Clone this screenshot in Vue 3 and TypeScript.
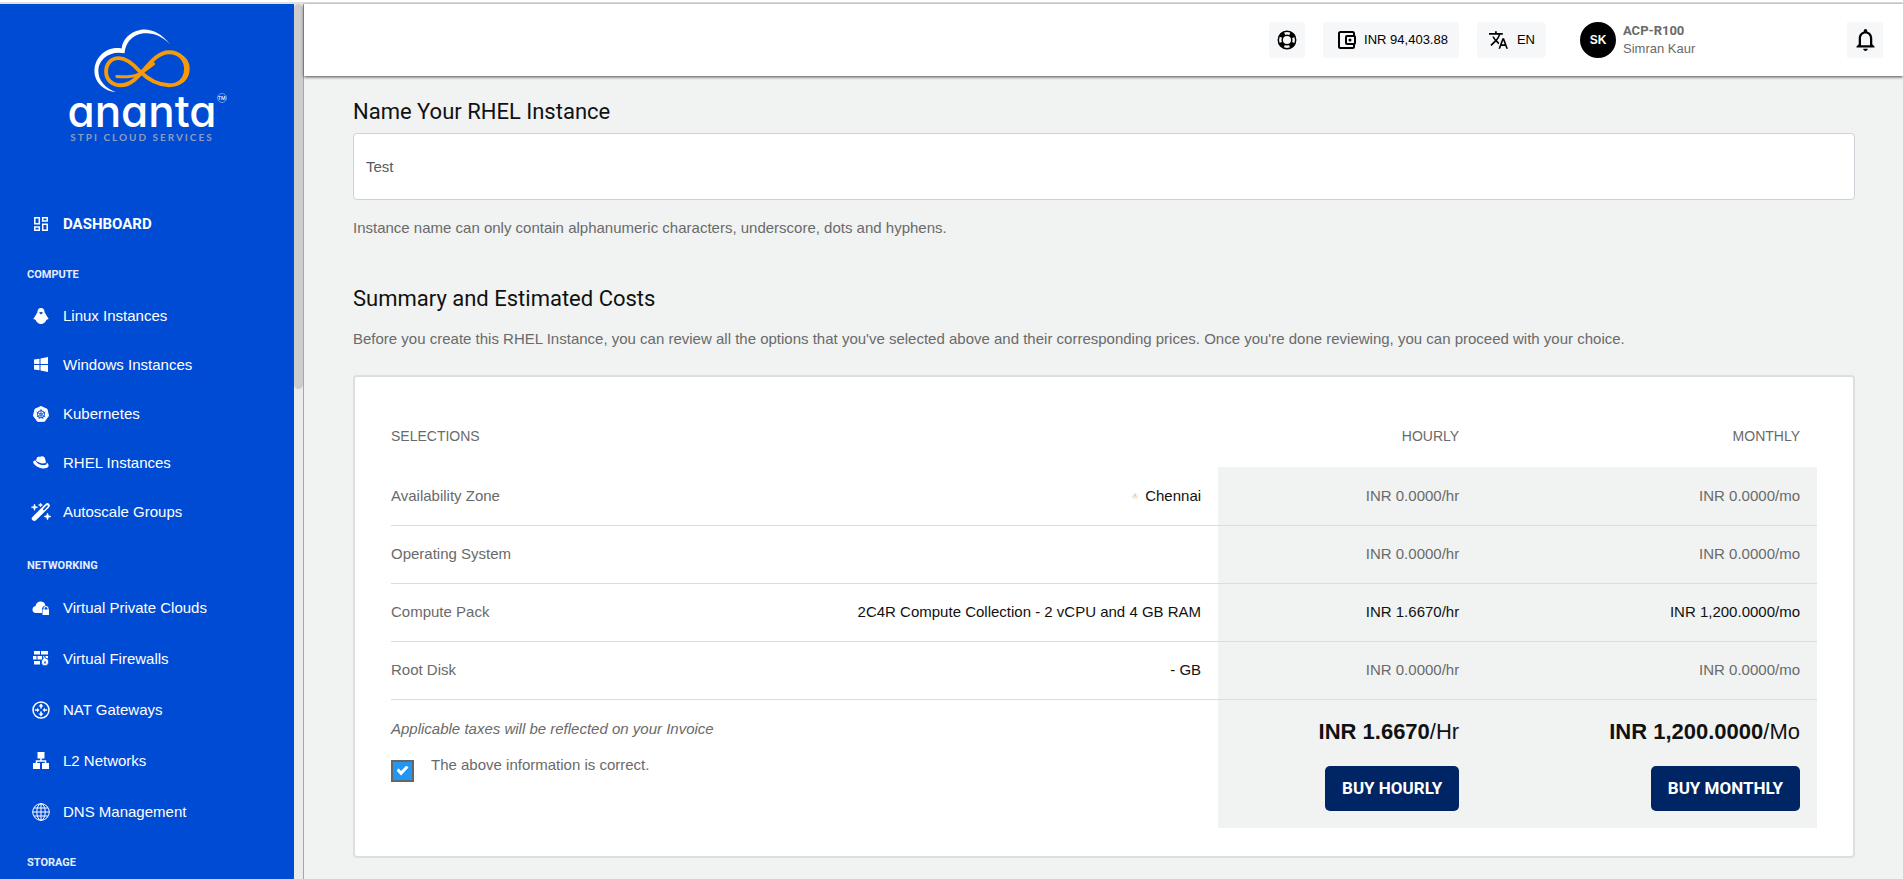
<script setup lang="ts">
import { ref } from 'vue'

interface NavItem {
  label: string
  icon: string
}
interface NavGroup {
  title: string
  key: string
  items: NavItem[]
}
interface CostRow {
  label: string
  value: string
  hourly: string
  monthly: string
  priced?: boolean
  badge?: boolean
}

const groups: NavGroup[] = [
  {
    title: 'COMPUTE',
    key: 'compute',
    items: [
      { label: 'Linux Instances', icon: 'linux' },
      { label: 'Windows Instances', icon: 'windows' },
      { label: 'Kubernetes', icon: 'kubernetes' },
      { label: 'RHEL Instances', icon: 'rhel' },
      { label: 'Autoscale Groups', icon: 'wand' },
    ],
  },
  {
    title: 'NETWORKING',
    key: 'networking',
    items: [
      { label: 'Virtual Private Clouds', icon: 'vpc' },
      { label: 'Virtual Firewalls', icon: 'firewall' },
      { label: 'NAT Gateways', icon: 'nat' },
      { label: 'L2 Networks', icon: 'l2' },
      { label: 'DNS Management', icon: 'dns' },
    ],
  },
  { title: 'STORAGE', key: 'storage', items: [] },
]

const rows: CostRow[] = [
  { label: 'Availability Zone', value: 'Chennai', hourly: 'INR 0.0000/hr', monthly: 'INR 0.0000/mo', badge: true },
  { label: 'Operating System', value: '', hourly: 'INR 0.0000/hr', monthly: 'INR 0.0000/mo' },
  {
    label: 'Compute Pack',
    value: '2C4R Compute Collection - 2 vCPU and 4 GB RAM',
    hourly: 'INR 1.6670/hr',
    monthly: 'INR 1,200.0000/mo',
    priced: true,
  },
  { label: 'Root Disk', value: '- GB', hourly: 'INR 0.0000/hr', monthly: 'INR 0.0000/mo' },
]

const instanceName = ref('Test')
const confirmed = ref(true)
</script>

<template>
  <div class="page">
    <aside class="sidebar">
      <a href="#" class="brand" aria-label="ananta STPI Cloud Services">
        <svg class="brand-mark" viewBox="0 0 100 68" aria-hidden="true">
          <path
            d="M79 17C70 5 58 0 48 2C37 4 30 12 29 21C14 18 1 30 1 44C1 57 12 65 23 66C12 62 5 54 5 44C5 32 17 23 32 26C33 16 39 8 49 6C60 4 70 8 79 17Z"
            fill="#fff"
          />
          <path
            d="M47 44C38 34 32 31 26 31C18 31 13 37 13 45C13 53 19 59 28 59C49 59 57 25 78 25C89 25 96 33 96 43C96 53 88 59 78 59C66 59 56 53 47 44Z"
            fill="none"
            stroke="#f79a0a"
            stroke-width="4"
          />
          <path d="M85 27C97 33 98 50 85 58C102 56 103 29 85 27Z" fill="#f79a0a" stroke="#f79a0a" stroke-width="2" />
          <path d="M24 50C42 51 46 50 62 37" fill="none" stroke="#f79a0a" stroke-width="3" stroke-linecap="round" />
        </svg>
        <span class="brand-name">ananta<small class="tm">TM</small></span>
        <span class="brand-tag">STPI CLOUD SERVICES</span>
      </a>

      <nav class="nav">
        <a href="#" class="nav-item nav-top">
          <span class="nav-icon">
            <svg width="14" height="14" viewBox="0 0 14 14" fill="none" stroke="currentColor" stroke-width="1.500" aria-hidden="true">
              <path d="M.8.8h4.500v6H.8zM.8 10h4.500v3.200H.8zM8.700.8h4.500V4H8.700zM8.700 7.200h4.500v6H8.700z" />
            </svg>
          </span>
          <span>DASHBOARD</span>
        </a>

        <section v-for="group in groups" :key="group.key" :class="['nav-group', group.key]">
          <h2 class="nav-title">{{ group.title }}</h2>
          <a v-for="item in group.items" :key="item.label" href="#" class="nav-item">
            <span class="nav-icon">
              <svg v-if="item.icon === 'linux'" width="16" height="16" viewBox="0 0 16 16" fill="currentColor" aria-hidden="true">
                <path fill-rule="evenodd" d="M8 0C5.500 0 4.500 2 4.300 4.500L2.500 7.500L.3 11L2.500 11.800C3.500 14.500 5.500 16 8 16S12.500 14.500 13.500 11.800L15.700 11L13.500 7.500L11.700 4.500C11.500 2 10.500 0 8 0ZM6.500 4h1l.5.5.5-.5h1v1.200L8 6.500L6.500 5.200Z" />
              </svg>
              <svg v-else-if="item.icon === 'windows'" width="14" height="15" viewBox="0 0 14 15" fill="currentColor" aria-hidden="true">
                <path d="M0 2.500L5.500 1.700V7H0zM6.500 1.500L14 0V7H6.500zM0 8h5.500v5.300L0 12.500zM6.500 8H14v7l-7.500-1.500z" />
              </svg>
              <svg v-else-if="item.icon === 'kubernetes'" width="16" height="16" viewBox="0 0 16 16" aria-hidden="true">
                <path d="M8 .5L14 3.200L15.500 9.800L11.500 15.300H4.500L.5 9.800L2 3.200Z" fill="currentColor" stroke="currentColor" stroke-linejoin="round" />
                <g fill="none" stroke="#004bd3">
                  <circle cx="8" cy="8.300" r="3.600" />
                  <circle cx="8" cy="8.300" r="1" />
                  <path d="M8 3v4M3.600 6l3.400 1.800M12.400 6L9 7.800M3.800 11L7 8.800M12.200 11L9 8.800M6 13l1.600-3.600M10 13L8.400 9.400" stroke-width=".8" />
                </g>
              </svg>
              <svg v-else-if="item.icon === 'rhel'" width="16" height="13" viewBox="0 0 16 13" fill="currentColor" aria-hidden="true">
                <path d="M4 1.500C5 0 6.500 1 8 .5C10 0 11.500 1 12 2.500L13 6.500C11 8.500 5 7 3 4.500Z" />
                <path d="M2.500 4.500C-.5 4.500-.5 7 2 9C5 12 10 13 13.500 12C16.500 11 16 8 13.800 6.500C14.200 9.500 10 9.500 7 8.500C4.500 7.500 3 6 2.500 4.500Z" />
              </svg>
              <svg v-else-if="item.icon === 'wand'" width="20" height="18" viewBox="0 0 20 18" fill="currentColor" aria-hidden="true">
                <path fill-rule="evenodd" d="M1.200 14.200L14.200 1.200C15.700-.3 17-.3 18 .7S19.300 3.200 18 4.500L5 17.200C4 18.200 2.600 18.200 1.600 17.200S.2 15.200 1.200 14.200ZM11.800 6.200L13 7.400L16.700 3.600C17.500 2.800 16.300 1.500 15.400 2.500Z" />
                <path d="M3.500 1L4.300 3.400L6.700 4.200L4.300 5L3.500 7.400L2.700 5L.3 4.200L2.700 3.400ZM9.500 0L10 1.500L11.500 2L10 2.500L9.500 4L9 2.500L7.500 2L9 1.500ZM16.500 10L17.400 12.600L20 13.500L17.400 14.400L16.500 17L15.600 14.400L13 13.500L15.600 12.600Z" stroke="currentColor" stroke-width=".6" />
              </svg>
              <svg v-else-if="item.icon === 'vpc'" width="18" height="14" viewBox="0 0 18 14" fill="currentColor" aria-hidden="true">
                <path d="M4 12C1.500 12 .5 10.500 .5 8.500S2 5.300 3.500 5C4 2 6 .5 8.500 .5C11 .5 13 2 13.500 4.500C11 5 10 6.500 10 8V12Z" />
                <path fill-rule="evenodd" d="M10.500 8.500h1V7.500a2.500 2.500 0 0 1 5 0v1h.5V14h-6.500ZM12.500 8.500h3V7.500a1.500 1.500 0 0 0-3 0Z" />
              </svg>
              <svg v-else-if="item.icon === 'firewall'" width="16" height="15" viewBox="0 0 16 15" aria-hidden="true">
                <path fill="currentColor" d="M1 0h6v3.500H1zM8 0h7v3.500H8zM0 5h3.500v3.500H0zM4.500 5H9v3.500H4.500zM1 10h6v3.500H1zM10 5h5v3H10z" />
                <path d="M11.500 4.500C12 7 8.300 8 8.300 11.200A3.700 3.700 0 0 0 15.700 11C15.700 9 14.500 8.500 14.200 7L13.300 8Z" fill="currentColor" stroke="#004bd3" stroke-width=".8" />
                <path d="M12 9.500C11 11 11 12.800 12 12.800S13 11 12 9.500Z" fill="#004bd3" />
              </svg>
              <svg v-else-if="item.icon === 'nat'" width="18" height="18" viewBox="0 0 18 18" fill="currentColor" aria-hidden="true">
                <circle cx="9" cy="9" r="8" fill="none" stroke="currentColor" stroke-width="1.500" />
                <path d="M9 2.500L11.500 5.500H9.800V7.500H8.200V5.500H6.500ZM9 15.500L11.500 12.500H9.800V10.500H8.200V12.500H6.500ZM7.500 9L5 6.800V8.200H2.800V9.800H5V11.200ZM10.500 9L13 6.800V8.200H15.200V9.800H13V11.200Z" />
              </svg>
              <svg v-else-if="item.icon === 'l2'" width="16" height="17" viewBox="0 0 16 17" aria-hidden="true">
                <path d="M4.500 0h7v6.500h-7zM0 11h7v6H0zM9 11h7v6H9z" fill="currentColor" />
                <path d="M8 6v3M3.500 11.500V9h9v2.500" fill="none" stroke="currentColor" stroke-width="1.500" />
              </svg>
              <svg v-else width="18" height="18" viewBox="0 0 18 18" fill="none" stroke="currentColor" aria-hidden="true">
                <circle cx="9" cy="9" r="8.300" />
                <ellipse cx="9" cy="9" rx="4.200" ry="8.300" />
                <path d="M9 .7v16.600M.7 9h16.600M2 5h14M2 13h14" />
              </svg>
            </span>
            <span>{{ item.label }}</span>
          </a>
        </section>
      </nav>
    </aside>
    <div class="scroll-track" aria-hidden="true"><div class="scroll-thumb"></div></div>

    <div class="content">
      <header class="topbar">
        <button type="button" class="chip chip-square" aria-label="Support">
          <svg width="20" height="20" viewBox="0 0 20 20" fill="none" stroke="currentColor" aria-hidden="true">
            <circle cx="10" cy="10" r="8.700" stroke-width="1.500" />
            <circle cx="10" cy="10" r="4.800" stroke-width="1.500" />
            <circle cx="10" cy="10" r="7" stroke-width="4.500" stroke-dasharray="5.500 5.500" stroke-dashoffset="-2.750" />
          </svg>
        </button>
        <button type="button" class="chip chip-wallet">
          <svg width="18" height="18" viewBox="0 0 18 18" fill="none" stroke="currentColor" stroke-width="2" aria-hidden="true">
            <path d="M16 5V2.500Q16 1 14.500 1H2.500Q1 1 1 2.500v13Q1 17 2.500 17h12Q16 17 16 15.500V13" />
            <rect x="8" y="5" width="9" height="8" rx="1" />
            <circle cx="12" cy="9" r="1.500" fill="currentColor" stroke="none" />
          </svg>
          <span>INR 94,403.88</span>
        </button>
        <button type="button" class="chip chip-lang">
          <svg width="19" height="18" viewBox="1 2 22 20" fill="currentColor" aria-hidden="true">
            <path d="M12.870 15.070l-2.540-2.510.03-.03A17.520 17.520 0 0 0 14.070 6H17V4h-7V2H8v2H1v1.990h11.170C11.500 7.920 10.440 9.750 9 11.350 8.070 10.320 7.300 9.190 6.690 8h-2c.73 1.630 1.730 3.170 2.980 4.560l-5.090 5.020L4 19l5-5 3.110 3.110.76-2.040zM18.500 10h-2L12 22h2l1.120-3h4.750L21 22h2l-4.500-12zm-2.620 7l1.620-4.330L19.120 17h-3.240z" />
          </svg>
          <span>EN</span>
        </button>
        <a href="#" class="user">
          <span class="avatar">SK</span>
          <span class="user-text">
            <strong>ACP-R100</strong>
            <span>Simran Kaur</span>
          </span>
        </a>
        <button type="button" class="chip chip-square chip-bell" aria-label="Notifications">
          <svg width="19" height="22" viewBox="4 2.500 16 19.500" fill="currentColor" aria-hidden="true">
            <path d="M12 22c1.100 0 2-.9 2-2h-4c0 1.100.9 2 2 2zm6-6v-5c0-3.070-1.630-5.640-4.500-6.320V4c0-.83-.67-1.500-1.500-1.500s-1.500.67-1.500 1.500v.68C7.640 5.360 6 7.920 6 11v5l-2 2v1h16v-1l-2-2zm-2 1H8v-6c0-2.480 1.510-4.500 4-4.500s4 2.020 4 4.500v6z" />
          </svg>
        </button>
      </header>

      <main class="main">
        <label for="instance-name" class="heading">Name Your RHEL Instance</label>
        <input id="instance-name" v-model="instanceName" type="text" class="name-input" />
        <p class="note">Instance name can only contain alphanumeric characters, underscore, dots and hyphens.</p>

        <h1 class="heading summary">Summary and Estimated Costs</h1>
        <p class="note intro">
          Before you create this RHEL Instance, you can review all the options that you've selected above and their
          corresponding prices. Once you're done reviewing, you can proceed with your choice.
        </p>

        <div class="card">
          <table class="costs">
            <colgroup>
              <col class="col-label" />
              <col class="col-value" />
              <col class="col-hourly" />
              <col class="col-monthly" />
            </colgroup>
            <thead>
              <tr>
                <th colspan="2" scope="col" class="left">SELECTIONS</th>
                <th scope="col">HOURLY</th>
                <th scope="col">MONTHLY</th>
              </tr>
            </thead>
            <tbody>
              <tr v-for="row in rows" :key="row.label" :class="{ priced: row.priced }">
                <td class="left">{{ row.label }}</td>
                <td class="value">
                  <svg v-if="row.badge" class="zone" width="8" height="10" viewBox="0 0 8 10" aria-hidden="true">
                    <circle cx="4" cy="5" r="3.500" fill="#f6f6f4" />
                    <path d="M1.500 5h5v2h-5z" fill="#f3e6cc" />
                    <path d="M3 3h2v2H3z" fill="#c9d6e6" />
                  </svg>
                  {{ row.value }}
                </td>
                <td class="price">{{ row.hourly }}</td>
                <td class="price">{{ row.monthly }}</td>
              </tr>
            </tbody>
            <tfoot>
              <tr>
                <td colspan="2" class="left">
                  <em>Applicable taxes will be reflected on your Invoice</em>
                  <label class="confirm">
                    <input v-model="confirmed" type="checkbox" />
                    <span>The above information is correct.</span>
                  </label>
                </td>
                <td class="price">
                  <div class="total"><strong>INR 1.6670</strong>/Hr</div>
                  <button type="button" class="buy">BUY HOURLY</button>
                </td>
                <td class="price">
                  <div class="total"><strong>INR 1,200.0000</strong>/Mo</div>
                  <button type="button" class="buy">BUY MONTHLY</button>
                </td>
              </tr>
            </tfoot>
          </table>
        </div>
      </main>
    </div>
  </div>
</template>

<style>
body {
  margin: 0;
  background: #f0f3f2;
}
</style>

<style scoped>
.page {
  box-sizing: border-box;
  display: flex;
  height: 100vh;
  overflow: hidden;
  padding-top: 2px;
  border-top: 2px solid #fff;
  background: linear-gradient(#e0e0e0 2px, #f0f3f2 2px);
  font-family: 'Liberation Sans', Arial, sans-serif;
  font-size: 15px;
  line-height: 24px;
  color: #6a6a6a;
}
a {
  color: inherit;
  text-decoration: none;
}
button {
  font: inherit;
  border: 0;
  cursor: pointer;
}

.sidebar {
  flex: 0 0 294px;
  overflow: hidden;
  background: #004bd3;
  color: #fff;
}
.brand {
  display: flex;
  flex-direction: column;
  align-items: center;
  height: 171px;
  padding: 24px 10px 0 0;
}
.brand-mark {
  width: 100px;
  height: 66px;
}
.brand-name {
  position: relative;
  font-family: Inter, Lato, sans-serif;
  font-feature-settings: 'cv11';
  font-size: 44px;
  font-weight: 500;
  line-height: 34px;
}
.tm {
  position: absolute;
  top: -1px;
  left: 100%;
  width: 8px;
  height: 8px;
  border: 1px solid #6f97e4;
  border-radius: 50%;
  font-size: 5px;
  line-height: 8px;
  text-align: center;
}
.brand-tag {
  margin-top: 2px;
  font-family: Lato, sans-serif;
  font-size: 10px;
  font-weight: 700;
  line-height: 14px;
  letter-spacing: 2px;
  color: #8f9dbb;
}
.nav-item {
  display: flex;
  align-items: center;
  gap: 12px;
  height: 50px;
  padding-left: 31px;
}
.compute .nav-item {
  height: 49px;
}
.networking .nav-item {
  height: 51px;
}
.nav-top {
  font-family: Roboto, sans-serif;
  font-weight: 700;
}
.nav-icon {
  display: flex;
  justify-content: center;
  width: 20px;
}
.nav-group {
  margin-top: 10px;
}
.nav-group.networking {
  margin-top: 14px;
}
.nav-title {
  margin: 0;
  padding-left: 27px;
  font-family: Roboto, sans-serif;
  font-size: 11px;
  font-weight: 700;
  line-height: 32px;
  color: #e6edfb;
}

.scroll-track {
  flex: 0 0 9px;
  border-right: 1px solid #8fa9dc;
  background: #ebebeb;
}
.scroll-thumb {
  height: 44%;
  border-radius: 5px;
  background: #cdcdcd;
}

.content {
  flex: 1;
  min-width: 0;
}
.topbar {
  display: flex;
  align-items: center;
  justify-content: flex-end;
  gap: 18px;
  height: 72px;
  padding-right: 20px;
  background: #fff;
  box-shadow: 0 1px 3px rgba(0, 0, 0, 0.7);
  font-size: 13px;
}
.chip {
  display: flex;
  align-items: center;
  gap: 8px;
  height: 36px;
  padding: 0 11px 0 15px;
  border-radius: 4px;
  background: #f6f7f9;
  color: #000;
}
.chip-square {
  justify-content: center;
  width: 36px;
  padding: 0;
}
.chip-bell {
  border-radius: 0;
}
.chip-lang {
  padding: 0 11px 0 12px;
  gap: 9px;
}
.user {
  display: flex;
  align-items: center;
  gap: 7px;
  width: 249px;
  margin-left: 16px;
}
.avatar {
  width: 36px;
  border-radius: 50%;
  background: #000;
  color: #fff;
  font-size: 12px;
  font-weight: 700;
  line-height: 36px;
  text-align: center;
}
.user-text {
  display: flex;
  flex-direction: column;
  line-height: 18px;
}
.user-text strong {
  font-family: Roboto, sans-serif;
  font-size: 13px;
}

.main {
  padding: 21px 48px 20px 49px;
}
.heading {
  display: block;
  margin: 0;
  font-family: Roboto, sans-serif;
  font-size: 22px;
  font-weight: 400;
  line-height: 30px;
  color: #111;
}
.name-input {
  box-sizing: border-box;
  display: block;
  width: 100%;
  height: 67px;
  margin-top: 6px;
  padding: 0 12px;
  border: 1px solid #ced2d8;
  border-radius: 4px;
  background: #fff;
  font: inherit;
  color: #555b64;
}
.note {
  margin: 16px 0 0;
}
.summary {
  margin-top: 44px;
}
.intro {
  margin-top: 13px;
}
.card {
  margin-top: 24px;
  padding: 30px 36px 28px;
  border: 2px solid #dcdfdf;
  border-radius: 4px;
  background: #fff;
}
.costs {
  width: 100%;
  table-layout: fixed;
  border-collapse: collapse;
}
.col-label {
  width: 22%;
}
.col-value {
  width: 36%;
}
.col-hourly {
  width: 18.1%;
}
.col-monthly {
  width: 23.9%;
}
th,
td {
  box-sizing: border-box;
  padding: 0 17px 0 0;
  text-align: right;
  font-weight: 400;
}
th {
  height: 60px;
  padding-bottom: 2px;
  font-size: 14px;
}
tbody td {
  height: 58px;
  border-bottom: 1px solid #dadddd;
}
.left {
  text-align: left;
}
.value,
.priced .price {
  color: #111;
}
.zone {
  margin-right: 2px;
}
.price {
  background: #f0f3f2;
}
tfoot td {
  padding-top: 17px;
  padding-bottom: 17px;
  vertical-align: top;
}
.confirm {
  display: flex;
  gap: 17px;
  margin-top: 12px;
}
.confirm input {
  appearance: none;
  display: grid;
  place-items: center;
  width: 23px;
  height: 22px;
  margin: 7px 0 0;
  border: 2px solid #666;
  background: #fff;
}
.confirm input:checked {
  background: #2196f3;
}
.confirm input:checked::before {
  content: '';
  width: 12px;
  height: 10px;
  background: #fff;
  clip-path: polygon(0 50%, 18% 30%, 38% 55%, 82% 0, 100% 20%, 38% 100%);
}
.total {
  font-size: 22px;
  line-height: 30px;
  color: #111;
}
.buy {
  height: 45px;
  margin-top: 19px;
  padding: 0 17px;
  border-radius: 5px;
  background: #002565;
  color: #fff;
  font-family: Roboto, sans-serif;
  font-size: 17px;
  font-weight: 700;
}
</style>
